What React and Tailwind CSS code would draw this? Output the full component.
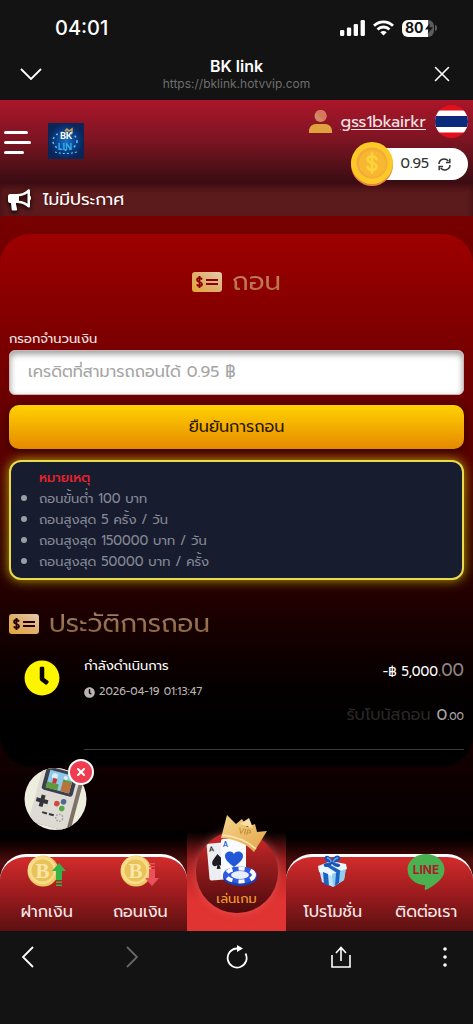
import React, { useState } from "react";
import { X } from "lucide-react";
import { FaClock } from "react-icons/fa";

const notes = [
  "ถอนขั้นต่ำ 100 บาท",
  "ถอนสูงสุด 5 ครั้ง / วัน",
  "ถอนสูงสุด 150000 บาท / วัน",
  "ถอนสูงสุด 50000 บาท / ครั้ง",
];

const StatusBar = () => (
  <div className="flex items-center justify-between pl-[55px] pr-9 pt-4">
    <span className="text-xl leading-6 font-medium text-white">04:01</span>
    <div className="flex items-center gap-2">
      <svg width="25" height="16" viewBox="0 0 25 16" fill="#fff">
        <rect x="0" y="10" width="4.300" height="6" rx="1.300" />
        <rect x="6.900" y="7.500" width="4.300" height="8.500" rx="1.300" />
        <rect x="13.700" y="4" width="4.300" height="12" rx="1.300" />
        <rect x="20.600" y="0" width="4.300" height="16" rx="1.300" />
      </svg>
      <svg width="21" height="16" viewBox="0 0 21 16" fill="none" stroke="#fff" strokeWidth="2.800">
        <path d="M1 5.800a13.500 13.500 0 0 1 19 0" />
        <path d="M4.500 9.500a8.500 8.500 0 0 1 12 0" />
        <path d="M10.500 15.500l3.200-3.300a4.600 4.600 0 0 0-6.400 0z" fill="#fff" stroke="none" />
      </svg>
      <div className="flex items-center gap-px">
        <div className="flex h-[17px] w-8 items-center overflow-hidden rounded-[6px] bg-[linear-gradient(90deg,#fff_80%,#5c5c5c_80%)] pl-[3px]">
          <span className="text-sm leading-4 font-bold text-[#131313]">80</span>
          <svg width="8" height="11" viewBox="0 0 9 12" fill="#131313" className="ml-px shrink-0">
            <path d="M5.500 0L0 7h4l-1 5 6-7.500H5z" />
          </svg>
        </div>
        <span className="h-[6px] w-[2px] rounded-r bg-[#5c5c5c]" />
      </div>
    </div>
  </div>
);

const BrowserTop = () => (
  <div className="h-[100px] bg-[#131313] font-['Inter',sans-serif]">
    <StatusBar />
    <div className="flex items-center justify-between pr-[18px] pl-5 pt-4">
      <button aria-label="minimize" className="w-6 text-white">
        <svg width="22" height="12" viewBox="0 0 22 12" fill="none" stroke="currentColor" strokeWidth="1.800">
          <path d="M1 1l10 10L21 1" />
        </svg>
      </button>
      <div className="text-center">
        <p className="text-base leading-5 font-semibold text-white">BK link</p>
        <p className="text-xs leading-4 text-[#6e6e6e]">https://bklink.hotvvip.com</p>
      </div>
      <button aria-label="close" className="text-white">
        <X size={26} strokeWidth={1.500} />
      </button>
    </div>
  </div>
);

const Logo = () => (
  <svg width="36" height="36" viewBox="0 0 36 36">
    <defs>
      <radialGradient id="logoBg">
        <stop offset="0" stopColor="#1a6fc4" />
        <stop offset="0.6" stopColor="#0c3d86" />
        <stop offset="1" stopColor="#0a2557" />
      </radialGradient>
    </defs>
    <rect width="36" height="36" fill="url(#logoBg)" />
    <ellipse cx="17" cy="18" rx="12" ry="9" fill="none" stroke="#5cc6f2" strokeWidth="1.500" strokeDasharray="2 3" />
    <path d="M17 8l2-2 2 2 3-2v4" stroke="#d9a24a" strokeWidth="1.500" fill="none" />
    <g fontFamily="Lato" fontWeight="900" textAnchor="middle">
      <text x="18" y="16" fontSize="9" fill="#fff">BK</text>
      <text x="17" y="27" fontSize="9" fill="#2fb0ea">LIN</text>
    </g>
    <path d="M7 29c6 2 15 2 22 0" stroke="#6fd0f7" strokeWidth="1" strokeDasharray="2 2" fill="none" />
  </svg>
);

const UserIcon = () => (
  <svg width="23" height="23" viewBox="0 0 23 23">
    <circle cx="11.500" cy="6" r="6" fill="#cf8a63" />
    <path d="M11.500 0a6 6 0 0 1 3 11.200L7 2A6 6 0 0 1 11.500 0z" fill="#d6775f" />
    <path d="M0 23v-2c0-4 3-7 7-7h9c4 0 7 3 7 7v2z" fill="#e2a13f" />
  </svg>
);

const ThaiFlag = () => (
  <svg width="33" height="33" viewBox="0 0 33 33">
    <clipPath id="flag">
      <circle cx="16.500" cy="16.500" r="16.500" />
    </clipPath>
    <g clipPath="url(#flag)">
      <rect width="33" height="33" fill="#e3101c" />
      <rect y="5.500" width="33" height="22" fill="#fff" />
      <rect y="11" width="33" height="11" fill="#0b2a7c" />
    </g>
  </svg>
);

const DollarCoin = () => (
  <svg width="44" height="44" viewBox="0 0 44 44">
    <circle cx="22" cy="23" r="21" fill="#e8823c" />
    <circle cx="22" cy="21" r="21" fill="#fdc926" />
    <circle cx="22" cy="21" r="15.500" fill="#f4a93a" />
    <circle cx="22.500" cy="21.500" r="13.500" fill="#f7b733" />
    <path
      d="M26.500 17c-.8-1.800-2.300-2.700-4.500-2.700-2.600 0-4.300 1.300-4.300 3.300 0 4.600 8.800 2.400 8.800 6.900 0 2-1.800 3.300-4.500 3.300-2.300 0-4-1-4.500-2.700M22 11.500v19"
      fill="none"
      stroke="#fdd43a"
      strokeWidth="2.600"
      strokeLinecap="round"
    />
  </svg>
);

const SyncIcon = () => (
  <svg width="13" height="13" viewBox="0 0 13 13" fill="none" stroke="#333" strokeWidth="1.500">
    <path d="M1 6a5.200 5.200 0 0 1 9.300-3M12 7a5.200 5.200 0 0 1-9.300 3" />
    <path d="M11.800.8v3.700H8M1.200 12.200V8.500H5" />
  </svg>
);

const Megaphone = () => (
  <svg width="23" height="23" viewBox="0 0 23 23" fill="#fff" className="drop-shadow-[0_2px_2px_#000]">
    <path d="M2 6h8v9H8v1l1 5c.2 1-.3 1.500-1 1.500H5c-.8 0-1.200-.4-1.300-1L3 15H2c-1 0-2-1-2-2V8c0-1 1-2 2-2z" />
    <path
      fillRule="evenodd"
      d="M9 6c4 0 8-1.500 11-4.500.6-.6 2-.4 2 .7v5.600c1.300.6 1.300 4 0 4.700v6c0 1-1.300 1.400-2 .7C17 16.500 13 15 9 15zM11 8.200v4.600c3 .3 6 1.200 8.500 3V5.200C17 7 14 8 11 8.200z"
    />
  </svg>
);

const SiteHeader = () => (
  <header className="relative z-10 flex items-center bg-linear-to-b from-[#ab1529] via-[#7c1422] via-50% to-[#3a0c12] pr-[5px] pl-1">
    <button aria-label="menu" className="mt-[2px] flex w-7 flex-col gap-[7px]">
      <span className="h-[3px] w-6 rounded bg-white" />
      <span className="h-[3px] w-[27px] rounded bg-white" />
      <span className="h-[3px] w-5 rounded bg-white" />
    </button>
    <div className="ml-4">
      <Logo />
    </div>
    <div className="ml-auto flex flex-col items-end pt-[5px]">
      <div className="flex items-center gap-[9px]">
        <UserIcon />
        <a href="#profile" className="text-base leading-6 text-[#f3e4e6] underline underline-offset-2">
          gss1bkairkr
        </a>
        <ThaiFlag />
      </div>
      <div className="mt-1 -mb-1 flex items-center">
        <div className="relative z-10 -mr-8">
          <DollarCoin />
        </div>
        <div className="flex h-8 items-center gap-[9px] rounded-full bg-white pr-[17px] pl-[38px] text-sm text-[#333]">
          <span>0.95</span>
          <button aria-label="refresh">
            <SyncIcon />
          </button>
        </div>
      </div>
    </div>
  </header>
);

const BillIcon = ({ cut }) => (
  <svg width="30" height="20" viewBox="0 0 30 20">
    <defs>
      <linearGradient id="bill" x1="0" y1="1" x2="1" y2="0">
        <stop offset="0" stopColor="#e6a638" />
        <stop offset="0.5" stopColor="#dfaf6c" />
        <stop offset="1" stopColor="#e4cdb0" />
      </linearGradient>
    </defs>
    <rect width="30" height="20" rx="3" fill="url(#bill)" />
    <g fill="none" stroke={cut} strokeWidth="1.800">
      <path d="M10 7.500C9.500 6.500 8.500 6 7.500 6 6 6 5 6.800 5 8c0 2.600 5 1.400 5 4 0 1.200-1 2-2.500 2-1.200 0-2.200-.6-2.600-1.600M7.500 4v12" />
      <path d="M14 8h12M14 12h12" />
    </g>
  </svg>
);

const WithdrawForm = () => {
  const [amount, setAmount] = useState("");

  return (
    <form className="px-[9px]" onSubmit={(e) => e.preventDefault()}>
      <label htmlFor="amount" className="block text-[13px] leading-5 text-[#f6e9e9]">
        กรอกจำนวนเงิน
      </label>
      <input
        id="amount"
        type="text"
        value={amount}
        onChange={(e) => setAmount(e.target.value)}
        placeholder="เครดิตที่สามารถถอนได้ 0.95 ฿"
        className="mt-px block h-[45px] w-full rounded-md border border-[#c9b6b6] bg-white px-[18px] pb-[2px] text-base text-gray-700 shadow-[inset_0_3px_6px_#999] placeholder:text-[#a5a5a5] focus:outline-none"
      />
      <button
        type="submit"
        className="mt-[10px] block h-11 w-full rounded-[10px] bg-linear-to-b from-[#ffd200] to-[#e48900] text-base text-[#2a1800] shadow-[0_2px_8px_#0008]"
      >
        ยืนยันการถอน
      </button>
    </form>
  );
};

const Notes = () => (
  <div className="mx-[9px] mt-[11px] rounded-xl border-2 border-[#e8dc4c] bg-[#181c2f] pt-[5px] pb-[6px] pl-7 text-[13px] leading-[21px] text-[#868996] shadow-[0_0_12px_#b8a800]">
    <p className="font-medium text-[#e8232c]">หมายเหตุ</p>
    <ul>
      {notes.map((note) => (
        <li key={note} className="relative">
          <span className="absolute top-[7px] -left-[18px] size-[6px] rounded-full bg-[#9a9ca6]" />
          {note}
        </li>
      ))}
    </ul>
  </div>
);

const HistoryRow = () => (
  <div className="flex pr-[9px] pl-6">
    <FaClock size={36} className="mt-2 shrink-0 text-[#fdf500]" />
    <div className="ml-6 flex flex-1 justify-between border-b border-[#3d3d3d] pb-5">
      <div className="pt-1">
        <p className="text-[13px] leading-5 text-white">กำลังดำเนินการ</p>
        <p className="mt-2 flex items-center gap-1 text-[11px] leading-4 text-[#b9b3b3]">
          <FaClock size={11} />
          2026-04-19 01:13:47
        </p>
      </div>
      <div className="text-right">
        <p className="pt-[6px] text-[13px] leading-6 text-white">
          -฿ 5,000<span className="text-[17px] leading-6 text-[#8d8585]">.00</span>
        </p>
        <p className="mt-[19px] text-base leading-6 text-[#2b2727]">
          รับโบนัสถอน <span className="text-[#a9a4a4]">0</span>
          <span className="text-[11px] text-[#a9a4a4]">.00</span>
        </p>
      </div>
    </div>
  </div>
);

const GameWidget = () => (
  <div className="absolute bottom-0 left-6 z-10">
    <svg width="64" height="64" viewBox="0 0 64 64">
      <clipPath id="disc">
        <circle cx="31.500" cy="32" r="31" />
      </clipPath>
      <circle cx="31.500" cy="32" r="31" fill="#eeeedf" />
      <g clipPath="url(#disc)">
        <g transform="rotate(15 31 32)">
          <rect x="16" y="2" width="38" height="58" rx="5" fill="#7d7263" />
          <rect x="11" y="1" width="39" height="59" rx="5" fill="#dedad4" />
          <rect x="15" y="2" width="32" height="24" rx="3" fill="#3c3f4c" />
          <rect x="19" y="5" width="24" height="18" fill="#8ec9ea" />
          <circle cx="25" cy="10" r="3" fill="#d9eefa" />
          <circle cx="36" cy="9" r="2" fill="#d9eefa" />
          <rect x="19" y="17" width="12" height="6" fill="#5f9a3c" />
          <rect x="34" y="12" width="9" height="11" fill="#b9743c" />
          <rect x="34" y="11" width="9" height="2" fill="#5f9a3c" />
          <path d="M24 12h4v5h-4z" fill="#c93434" />
          <path d="M17 31h4v4h4v4h-4v4h-4v-4h-4v-4h4z" fill="#333438" />
          <circle cx="34" cy="36" r="2.800" fill="#d2473c" />
          <circle cx="40" cy="32.500" r="2.800" fill="#4d6a92" />
          <circle cx="40" cy="39.500" r="2.800" fill="#58a648" />
          <path d="M22 48h5M29 48h5" stroke="#34353a" strokeWidth="2" />
          <circle cx="40" cy="49" r="3.500" fill="none" stroke="#a19b92" strokeWidth="1.500" strokeDasharray="1.500 1.500" />
        </g>
      </g>
    </svg>
    <button
      aria-label="close game"
      className="absolute -top-2 -right-[6px] grid size-[26px] place-items-center rounded-full border-2 border-white bg-[#f03c50] text-white"
    >
      <X size={12} strokeWidth={4} />
    </button>
  </div>
);

const BitcoinIcon = ({ up }) => (
  <svg width="40" height="34" viewBox="0 0 40 34">
    <circle cx="16" cy="17" r="15.500" fill="#efc961" />
    <circle cx="15" cy="16" r="14" fill="#f7dd8b" />
    <circle cx="15.500" cy="16.500" r="11" fill="#e9c25a" />
    <text x="15.500" y="24" fontSize="21" fontWeight="700" textAnchor="middle" fontFamily="Liberation Serif" fill="#f8e6a6">B</text>
    {up ? (
      <g fill="#35b24a">
        <path d="M32 9l7 8h-4v9h-6v-9h-4z" />
        <path d="M29 27.500h6V29h-6zM29 30.500h6V32h-6z" />
      </g>
    ) : (
      <g fill="#e8535b">
        <path d="M32 32l-7-8h4v-9h6v9h4z" />
        <path d="M29 9h6v1.500h-6zM29 12h6v1.500h-6z" />
      </g>
    )}
  </svg>
);

const GiftIcon = () => (
  <svg width="32" height="34" viewBox="0 0 32 34">
    <path d="M2 15l13 4 14-7-2 14-11 7-11-5z" fill="#bfe4f8" />
    <path d="M1 12L14 7l15 3 1 5-15 7-13-4z" fill="#eaf7fe" />
    <path d="M15 20l1 13 11-7 2-11z" fill="#8fcdf0" />
    <path d="M6 18l5 2 1 12-5-2zM19 19l4-2-1 12-4 3zM6 10l4-1 14 8-4 2z" fill="#1c62c4" />
    <path d="M14 9C7 8 6 3 9 2s6 3 6 6c0-4 4-8 7-6s1 6-6 7c5 0 8 1 7 3s-6 1-8-2c-2 3-7 4-8 2s2-3 7-3z" fill="#1a52b5" />
    <path d="M10 4c2 0 4 2 4 4M21 4c-2 0-4 2-5 4" stroke="#5fa8ee" strokeWidth="1.500" fill="none" />
  </svg>
);

const LineIcon = () => (
  <svg width="38" height="36" viewBox="0 0 38 36">
    <path d="M19 0c10 0 18.500 6.500 18.500 15.500 0 6-3.500 10-8.500 14-4 3.300-8 5.500-10 6.300-1.600.6-1.300-.6-1.200-1.300l.4-3.200C8.500 30.700.5 24.500.5 15.500.5 6.500 9 0 19 0z" fill="#4bb04f" />
    <text x="19" y="20" fontSize="12" fontWeight="700" textAnchor="middle" fontFamily="Inter" fill="#a8202b">LINE</text>
  </svg>
);

const CardsIcon = () => (
  <svg width="64" height="72" viewBox="0 0 64 72">
    <defs>
      <linearGradient id="crown" x1="0" y1="0" x2="1" y2="1">
        <stop offset="0" stopColor="#f6d58c" />
        <stop offset="1" stopColor="#e3a548" />
      </linearGradient>
    </defs>
    <g transform="rotate(-5 12 46)">
      <rect x="3" y="28" width="20" height="37" rx="2" fill="#eceef2" />
      <path d="M13 39c3 4 6 6 6 9s-3 4-5 2l1 4h-4l1-4c-2 2-5 1-5-2s3-5 6-9z" fill="#1c1c22" />
      <text x="5" y="36" fontSize="7" fontWeight="700" fontFamily="Lato" fill="#1c1c22">A</text>
    </g>
    <rect x="16" y="24" width="25" height="39" rx="2" fill="#fbfcff" />
    <path d="M29 52c-5-4-9-7-9-11 0-5 7-6 9-2 2-4 9-3 9 2 0 4-4 7-9 11z" fill="#2257d8" />
    <text x="18" y="32" fontSize="7" fontWeight="700" fontFamily="Lato" fill="#2257d8">A</text>
    <path d="M22 0l9 9 6-5 5 8 8-3 2 8 10-1-13 21C42 29 30 24 16 23z" fill="url(#crown)" />
    <path d="M35 9l9-6 4 10z" fill="#f7e0a6" />
    <path d="M17 20c12 1 24 5 34 14" stroke="#fae6b4" strokeWidth="1.500" fill="none" />
    <text x="33" y="18" fontSize="8" fontFamily="Lato" fill="#b98028" transform="rotate(14 33 18)">VIP</text>
    <ellipse cx="35" cy="62" rx="17" ry="9" fill="#1a3fae" />
    <ellipse cx="35" cy="60" rx="17" ry="8.500" fill="#2e5be0" />
    <ellipse cx="35" cy="60" rx="14" ry="6.500" fill="none" stroke="#fff" strokeWidth="4" strokeDasharray="6 6" />
    <ellipse cx="35" cy="60" rx="9" ry="4" fill="#e9eefb" />
  </svg>
);

const NavItem = ({ icon, label }) => (
  <a href="#nav" className="-mt-[3px] flex flex-1 flex-col items-center text-base leading-6 text-[#faeaea]">
    <span className="flex h-9 items-start">{icon}</span>
    <span className="mt-[10px] whitespace-nowrap">{label}</span>
  </a>
);

const BottomNav = () => (
  <nav className="flex items-end bg-linear-to-b from-black via-[#4c0e0e] via-30% to-[#5a1010]">
    <div className="flex h-[77px] flex-1 rounded-t-[26px] border-t-[3px] border-white bg-linear-to-b from-[#d32c2c] via-[#9c1b1e] via-50% to-[#5c1011]">
      <NavItem icon={<BitcoinIcon up />} label="ฝากเงิน" />
      <NavItem icon={<BitcoinIcon />} label="ถอนเงิน" />
    </div>
    <div className="relative flex h-[100px] w-[99px] justify-center bg-linear-to-b from-transparent via-[#c52a2a] via-45% to-[#e03432] to-70%">
      <a
        href="#play"
        className="relative flex size-[82px] flex-col items-center justify-end rounded-full bg-linear-to-b from-[#d02a2b] to-[#4e0a0d] pb-1 text-[13px] leading-5 text-[#f0a030] shadow-[0_0_8px_#f0707080]"
      >
        <span className="absolute -top-4 left-[9px]">
          <CardsIcon />
        </span>
        <span className="relative">เล่นเกม</span>
      </a>
    </div>
    <div className="flex h-[77px] flex-1 rounded-t-[26px] border-t-[3px] border-white bg-linear-to-b from-[#d32c2c] via-[#9c1b1e] via-50% to-[#5c1011]">
      <NavItem icon={<GiftIcon />} label="โปรโมชั่น" />
      <NavItem icon={<LineIcon />} label="ติดต่อเรา" />
    </div>
  </nav>
);

const BrowserBottom = () => (
  <div className="flex flex-1 items-start justify-between bg-[#131313] px-3 pt-[10px] text-white">
    <button aria-label="back" className="grid size-8 place-items-center">
      <svg width="12" height="22" viewBox="0 0 12 22" fill="none" stroke="currentColor" strokeWidth="1.800">
        <path d="M11 1L1 11l10 10" />
      </svg>
    </button>
    <button aria-label="forward" className="grid size-8 place-items-center text-[#666]">
      <svg width="12" height="22" viewBox="0 0 12 22" fill="none" stroke="currentColor" strokeWidth="1.800">
        <path d="M1 1l10 10L1 21" />
      </svg>
    </button>
    <button aria-label="reload" className="grid size-8 place-items-center">
      <svg width="22" height="24" viewBox="0 0 22 24" fill="none" stroke="currentColor" strokeWidth="1.800">
        <path d="M11 3.500a9.500 9.500 0 1 0 8.500 5" />
        <path d="M11 0l6 3.500-6 3.500z" fill="currentColor" stroke="none" />
      </svg>
    </button>
    <button aria-label="share" className="grid size-8 place-items-center">
      <svg width="20" height="22" viewBox="0 0 20 22" fill="none" stroke="currentColor" strokeWidth="1.600">
        <path d="M1 9v12h18V9M10 15V2M5 7l5-5.500L15 7" />
      </svg>
    </button>
    <button aria-label="more" className="grid size-8 place-items-center">
      <svg width="4" height="20" viewBox="0 0 4 20" fill="currentColor">
        <circle cx="2" cy="2" r="1.800" />
        <circle cx="2" cy="10" r="1.800" />
        <circle cx="2" cy="18" r="1.800" />
      </svg>
    </button>
  </div>
);

const App = () => (
  <div className="flex min-h-screen flex-col bg-black font-['Prompt','Kanit','Noto_Sans_Thai','Lato',sans-serif]">
    <BrowserTop />
    <SiteHeader />
    <div className="flex items-center gap-3 bg-[#5b1a1b] px-2 py-1 text-white shadow-[inset_0_5px_6px_#3a0c12]">
      <Megaphone />
      <p className="text-[17px] leading-[26px] text-shadow-sm">ไม่มีประกาศ</p>
    </div>
    <main className="relative bg-linear-to-b from-[#780000] via-[#3c0000] via-50% to-[#060001] pt-[18px] pb-[65px]">
      <section className="rounded-[30px] bg-linear-to-b from-[#9e0000] via-[#5c0000] via-40% to-black pt-6 pb-4">
        <h1 className="flex h-12 items-center justify-center gap-[10px] text-[26px]">
          <BillIcon cut="#8b0000" />
          <span className="bg-linear-to-b from-[#d08a74] to-[#b06428] bg-clip-text leading-[48px] text-transparent">ถอน</span>
        </h1>
        <div className="pt-[23px]">
          <WithdrawForm />
        </div>
        <Notes />
        <h2 className="mt-5 flex h-12 items-center gap-[10px] px-[9px] text-[26px]">
          <BillIcon cut="#260000" />
          <span className="bg-linear-to-b from-[#b08e7c] to-[#7c5428] bg-clip-text leading-[48px] text-transparent">ประวัติการถอน</span>
        </h2>
        <div className="pt-1">
          <HistoryRow />
        </div>
      </section>
      <GameWidget />
    </main>
    <BottomNav />
    <BrowserBottom />
  </div>
);

export default App;
